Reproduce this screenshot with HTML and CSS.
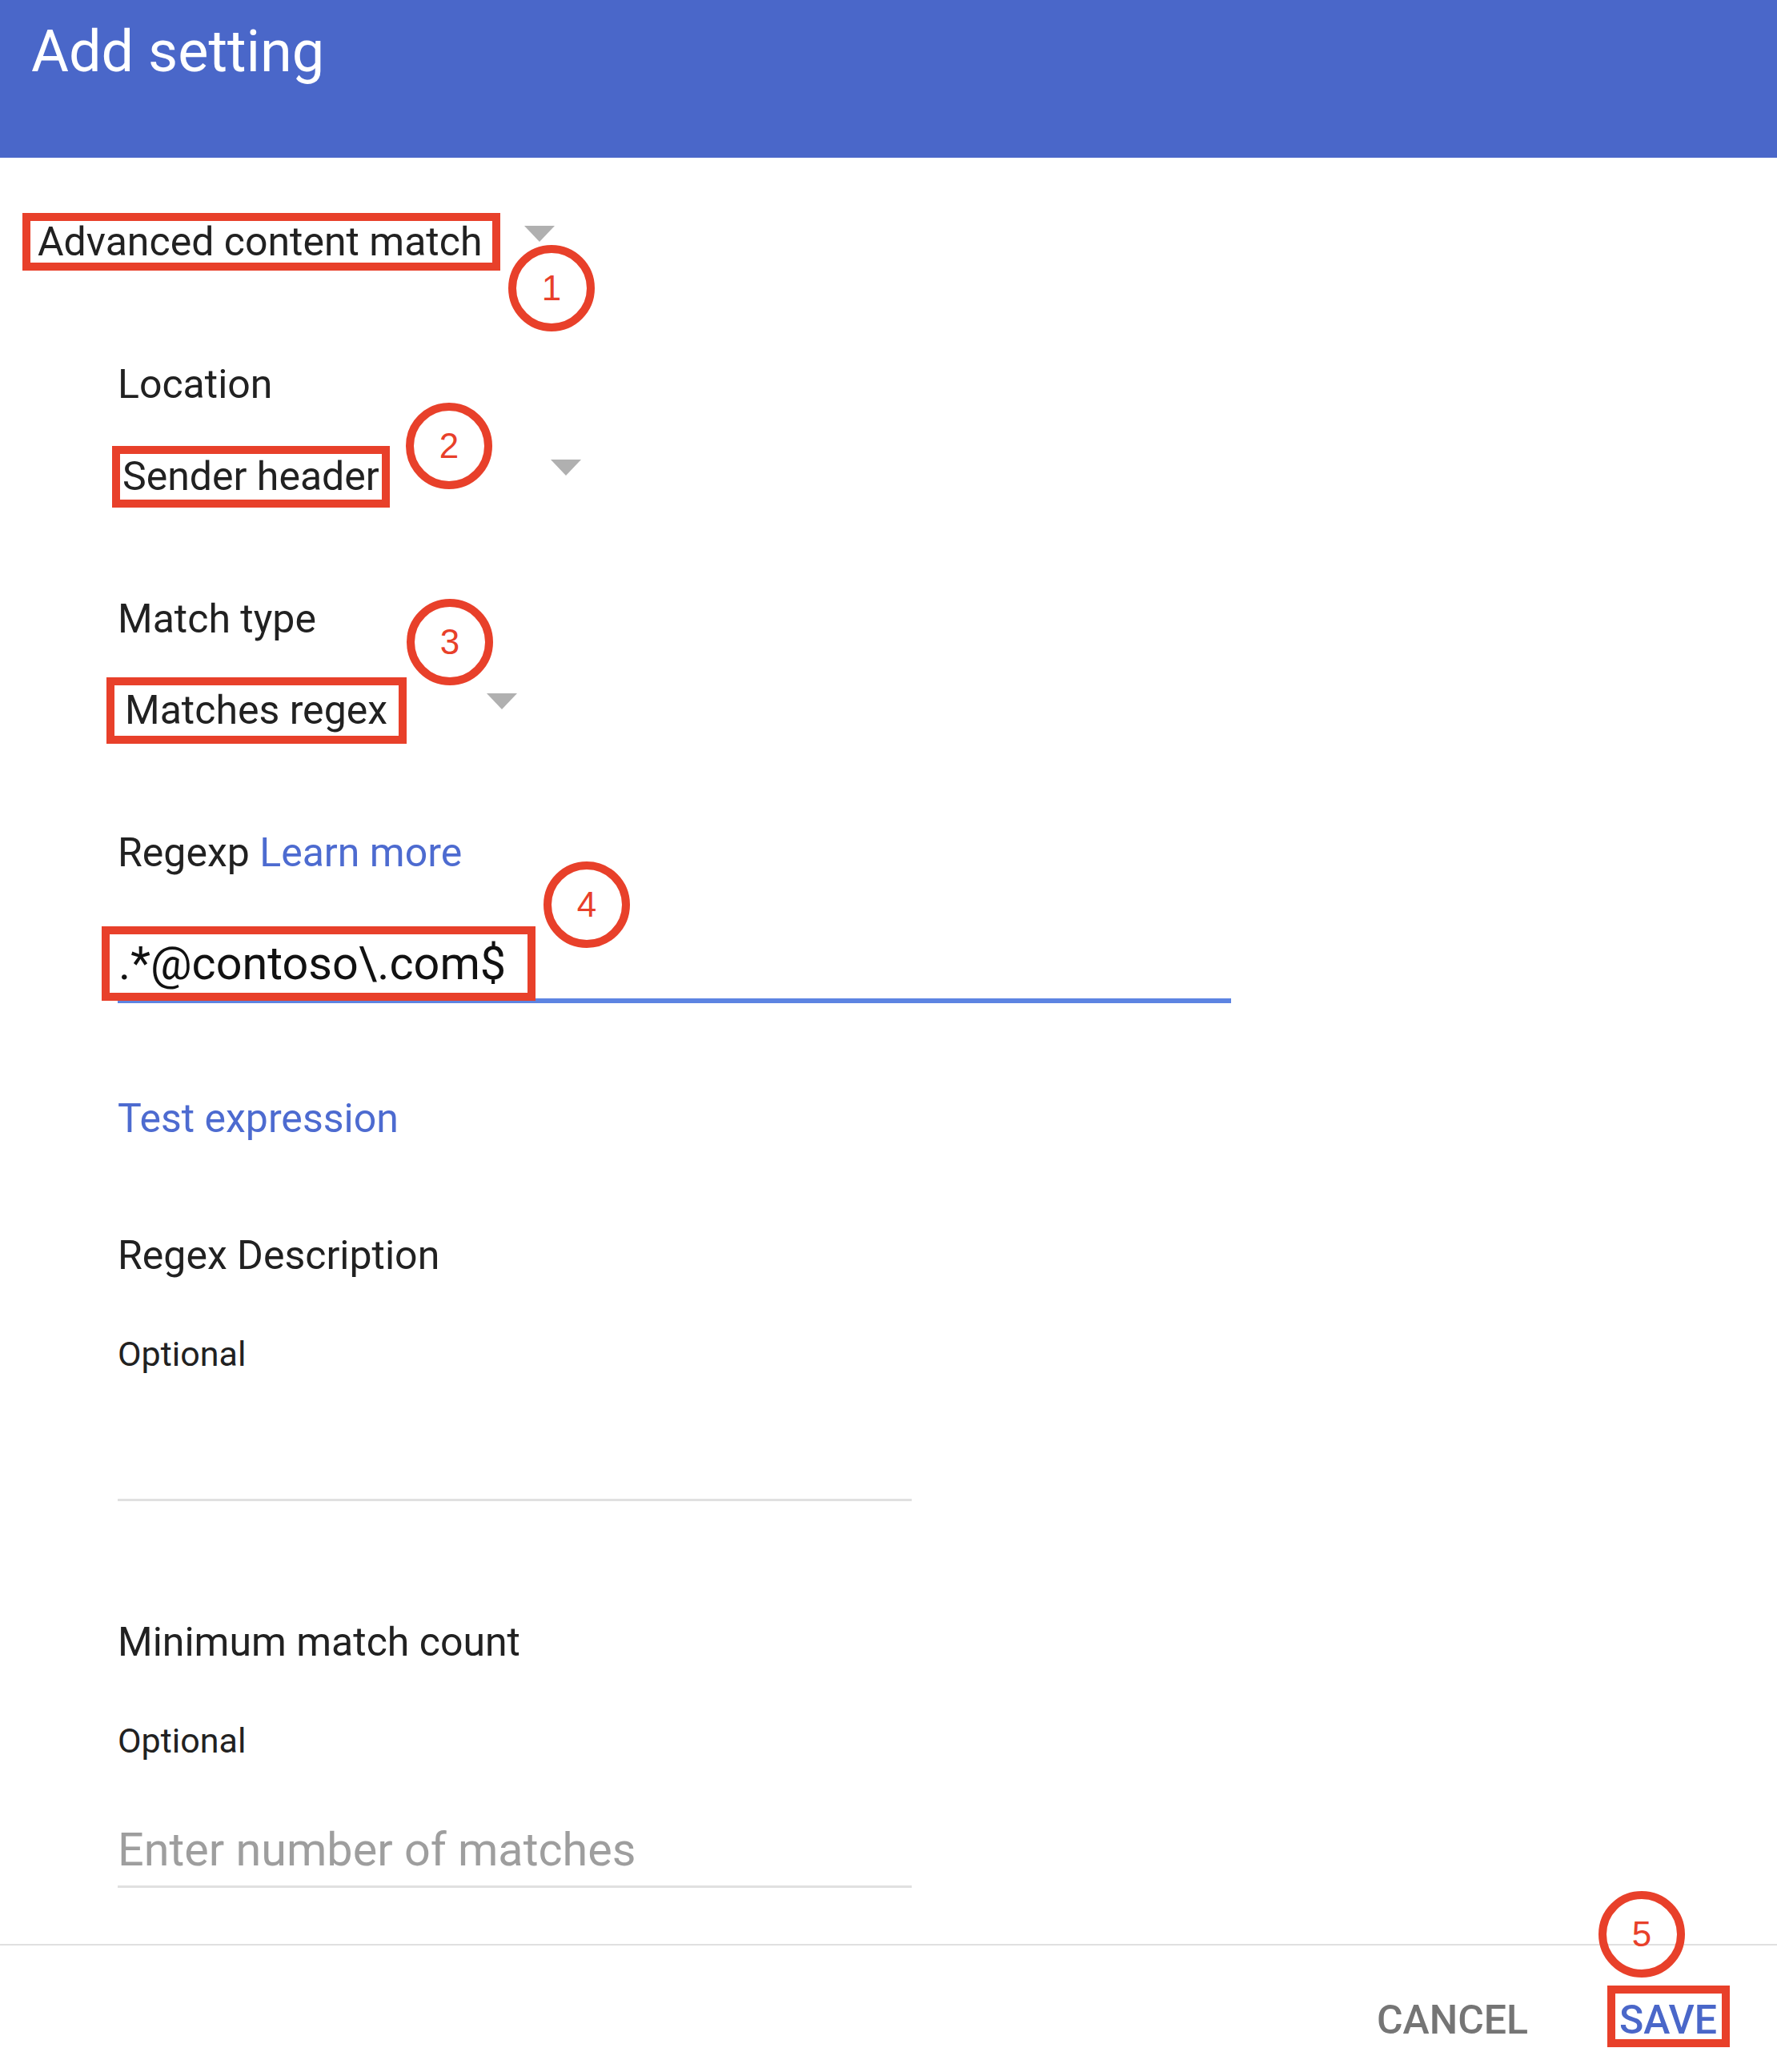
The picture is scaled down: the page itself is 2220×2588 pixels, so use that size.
FILE: index.html
```html
<!DOCTYPE html>
<html lang="en">
<head>
<meta charset="utf-8">
<title>Add setting</title>
<link rel="stylesheet" href="styles.css">
</head>
<body>
<div class="dialog">
  <header class="dialog-header">
    <h1 class="dialog-title">Add setting</h1>
  </header>

  <main class="dialog-body">
    <div class="type-row">
      <span class="mark mark-type">Advanced content match</span>
      <span class="caret caret-type"></span>
      <span class="badge badge-1">1</span>
    </div>

    <section class="field field-location">
      <div class="field-label">Location</div>
      <div class="select-row">
        <span class="mark mark-location">Sender header</span>
        <span class="caret caret-location"></span>
        <span class="badge badge-2">2</span>
      </div>
    </section>

    <section class="field field-match">
      <div class="field-label">Match type</div>
      <div class="select-row">
        <span class="mark mark-match">Matches regex</span>
        <span class="caret caret-match"></span>
        <span class="badge badge-3">3</span>
      </div>
    </section>

    <section class="field field-regex">
      <div class="field-label">Regexp <a class="link" href="#">Learn more</a></div>
      <div class="regex-input">
        <span class="mark mark-regex">.*@contoso\.com$</span>
        <span class="badge badge-4">4</span>
      </div>
    </section>

    <section class="field field-test">
      <a class="link test-link" href="#">Test expression</a>
    </section>

    <section class="field field-desc">
      <div class="field-label">Regex Description</div>
      <div class="field-hint">Optional</div>
      <div class="text-input"></div>
    </section>

    <section class="field field-count">
      <div class="field-label">Minimum match count</div>
      <div class="field-hint">Optional</div>
      <div class="text-input placeholder">Enter number of matches</div>
    </section>
  </main>

  <footer class="dialog-footer">
    <button class="btn btn-cancel" type="button">CANCEL</button>
    <button class="btn btn-save" type="button">SAVE</button>
    <span class="badge badge-5">5</span>
  </footer>
</div>
</body>
</html>
```

FILE: styles.css
```css
html, body {
  margin: 0;
  padding: 0;
  background: #ffffff;
}

body {
  font-family: Roboto, "Noto Sans", "Liberation Sans", sans-serif;
  color: #212121;
}

.dialog {
  width: 2220px;
  min-height: 2588px;
  display: flex;
  flex-direction: column;
}

/* Header */
.dialog-header {
  height: 197px;
  box-sizing: border-box;
  background: #4a67c9;
  padding: 29px 0 0 39px;
}

.dialog-title {
  margin: 0;
  font-size: 72px;
  font-weight: 400;
  line-height: 72px;
  color: #ffffff;
}

/* Body */
.dialog-body {
  flex: 1;
  padding-top: 69px;
}

.mark {
  display: inline-block;
  border: 10px solid #e8402a;
  white-space: nowrap;
}

.caret {
  flex: none;
  width: 0;
  height: 0;
  border-left: 19.5px solid transparent;
  border-right: 19.5px solid transparent;
  border-top: 20px solid #b0b0b0;
}

.badge {
  position: absolute;
  width: 108px;
  height: 108px;
  box-sizing: border-box;
  border: 10px solid #e8402a;
  border-radius: 50%;
  display: flex;
  align-items: center;
  justify-content: center;
  font-family: "Liberation Sans", Arial, sans-serif;
  font-size: 44px;
  line-height: 1;
  color: #e8402a;
}

/* Type select */
.type-row {
  position: relative;
  display: flex;
  align-items: flex-start;
  padding-left: 28px;
}

.mark-type {
  font-size: 50px;
  line-height: 52px;
  padding: 0 13px 0 9px;
}

.caret-type {
  margin: 16px 0 0 30px;
}

.badge-1 {
  left: 635px;
  top: 40px;
}

/* Fields */
.field {
  padding-left: 147px;
}

.field-label {
  font-size: 50px;
  line-height: 60px;
}

.field-hint {
  margin-top: 68px;
  font-size: 43px;
  line-height: 50px;
}

.link {
  color: #4d6bd0;
  text-decoration: none;
}

.select-row {
  position: relative;
  display: flex;
  align-items: flex-start;
}

.field-location {
  margin-top: 112px;
}

.field-location .select-row {
  margin-top: 47px;
}

.mark-location {
  font-size: 50px;
  line-height: 57px;
  padding: 0 3px 0 3px;
  margin-left: -7px;
}

.caret-location {
  margin: 17px 0 0 201px;
}

.badge-2 {
  left: 360px;
  top: -54px;
}

.field-match {
  margin-top: 109px;
}

.field-match .select-row {
  margin-top: 43px;
}

.mark-match {
  font-size: 50px;
  line-height: 63px;
  padding: 0 14px 0 13px;
  margin-left: -14px;
}

.caret-match {
  margin: 20px 0 0 100px;
}

.badge-3 {
  left: 361px;
  top: -98px;
}

.field-regex {
  margin-top: 106px;
}

.regex-input {
  position: relative;
  display: flex;
  align-items: flex-start;
  width: 1391px;
  margin-top: 62px;
  border-bottom: 6px solid #5d84e2;
}

.mark-regex {
  font-size: 57.5px;
  line-height: 73px;
  padding: 0 27px 0 11px;
  margin: 0 0 -3px -20px;
  color: #111111;
}

.badge-4 {
  left: 532px;
  top: -81px;
}

.field-test {
  margin-top: 114px;
}

.test-link {
  display: block;
  font-size: 50px;
  line-height: 60px;
}

.field-desc {
  margin-top: 111px;
}

.text-input {
  width: 992px;
  height: 70px;
  margin-top: 77px;
  padding-bottom: 9px;
  border-bottom: 3px solid #e0e0e0;
  font-size: 57.5px;
  line-height: 70px;
}

.placeholder {
  color: #9e9e9e;
}

.field-count {
  margin-top: 146px;
}

/* Footer */
.dialog-footer {
  position: relative;
  display: flex;
  justify-content: flex-end;
  align-items: flex-start;
  border-top: 2px solid #e0e0e0;
  padding: 50px 59px 31px 0;
}

.btn {
  height: 77px;
  box-sizing: border-box;
  margin: 0;
  border: 10px solid transparent;
  padding: 9px 6px 0 5px;
  background: none;
  font-family: Roboto, "Noto Sans", sans-serif;
  font-size: 50px;
  font-weight: 500;
  line-height: 48px;
  cursor: pointer;
}

.btn-cancel {
  color: #757575;
  margin-right: 83px;
}

.btn-save {
  color: #4a67c9;
  border-color: #e8402a;
}

.badge-5 {
  right: 115px;
  top: -68px;
}
```
